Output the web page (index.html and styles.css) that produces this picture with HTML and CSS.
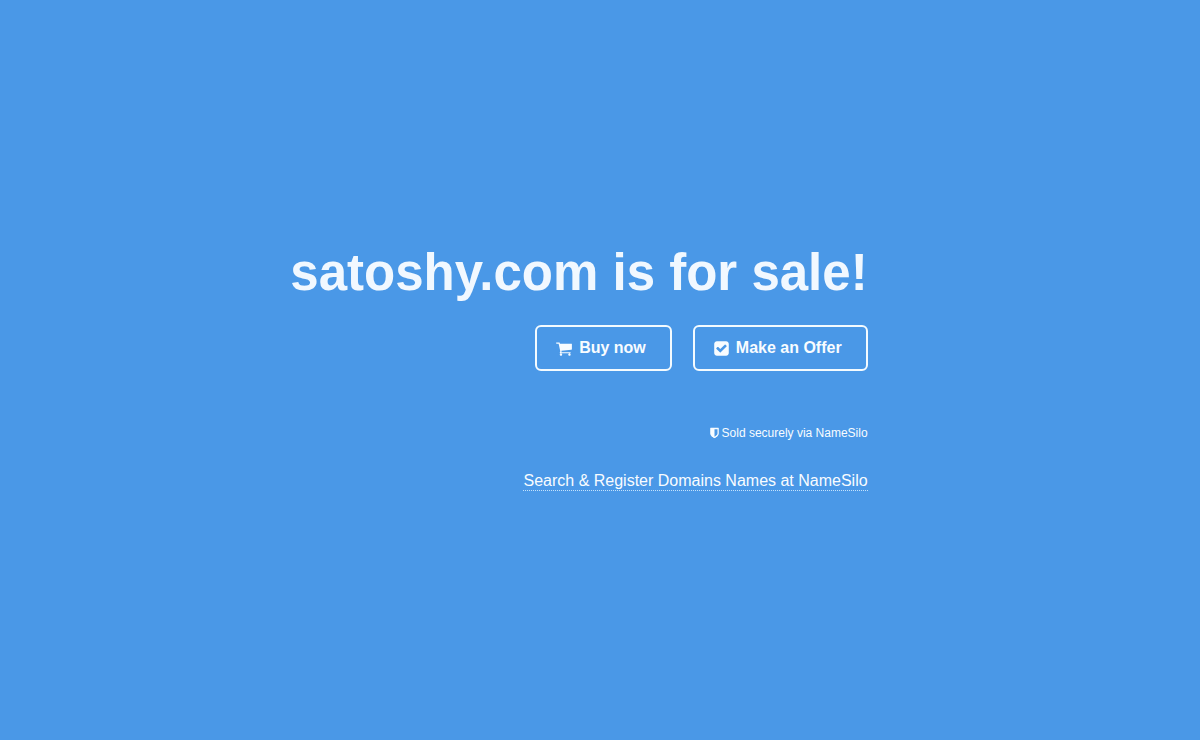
FILE: index.html
```html
<!DOCTYPE html>
<html lang="en">
<head>
    <meta charset="UTF-8">
    <meta name="viewport" content="width=device-width, initial-scale=1.0">
    <title>satoshy.com is for sale!</title>
    <link rel="stylesheet" href="styles.css">
</head>
<body>
    <main class="page">
        <div class="content">
            <h1 class="title">satoshy.com is for sale!</h1>

            <div class="actions">
                <a class="button" href="#buy">
                    <svg class="icon icon-cart" viewBox="0 0 1664 1792" aria-hidden="true">
                        <path d="M640 1536q0 52-38 90t-90 38-90-38-38-90 38-90 90-38 90 38 38 90zm896 0q0 52-38 90t-90 38-90-38-38-90 38-90 90-38 90 38 38 90zm128-1088v512q0 24-16.500 42.500t-40.500 21.500l-1044 122q13 60 13 70 0 16-24 64h920q26 0 45 19t19 45-19 45-45 19h-1024q-26 0-45-19t-19-45q0-11 8-31.500t16-36 21.500-40 15.500-29.500l-177-823h-204q-26 0-45-19t-19-45 19-45 45-19h256q16 0 28.500 6.500t19.500 15.500 13 24.500 8 26 5.500 29.500 4.500 26h1201q26 0 45 19t19 45z"/>
                    </svg>
                    Buy now
                </a>
                <a class="button" href="#offer">
                    <svg class="icon icon-check" viewBox="0 0 1536 1792" aria-hidden="true">
                        <path d="M685 1299l614-614q19-19 19-45t-19-45l-102-102q-19-19-45-19t-45 19l-467 467-211-211q-19-19-45-19t-45 19l-102 102q-19 19-19 45t19 45l358 358q19 19 45 19t45-19zm851-883v960q0 119-84.500 203.500t-203.500 84.500h-960q-119 0-203.500-84.500t-84.500-203.500v-960q0-119 84.500-203.500t203.500-84.500h960q119 0 203.500 84.500t84.500 203.500z"/>
                    </svg>
                    Make an Offer
                </a>
            </div>

            <p class="secure">
                <svg class="icon icon-shield" viewBox="256 0 1280 1792" aria-hidden="true">
                    <path d="M1344 960v-640h-448v1137q119-63 213-137 235-184 235-360zm192-768v768q0 86-33.500 170.500t-83 150-118 127.500-126.500 103-121 77.500-89.500 49.500-42.500 20q-12 6-26 6t-26-6q-16-7-42.500-20t-89.500-49.500-121-77.500-126.500-103-118-127.500-83-150-33.500-170.500v-768q0-26 19-45t45-19h1152q26 0 45 19t19 45z"/>
                </svg>
                Sold securely via NameSilo
            </p>

            <a class="register-link" href="#register">Search &amp; Register Domains Names at NameSilo</a>
        </div>
    </main>
</body>
</html>
```
FILE: styles.css
```css
* {
    margin: 0;
    padding: 0;
    box-sizing: border-box;
}

body {
    font-family: "Liberation Sans", Arial, Helvetica, sans-serif;
    font-size: 16px;
    line-height: 20px;
    color: #f8fcff;
    background: #4a98e7;
}

.page {
    min-height: 100vh;
    display: flex;
    align-items: center;
    justify-content: center;
    padding: 0 42px 6px 0;
}

.content {
    display: flex;
    flex-direction: column;
    align-items: flex-end;
}

.title {
    font-size: 51px;
    line-height: 60px;
    color: #f1f8ff;
    margin-bottom: 22px;
}

.actions {
    display: flex;
    gap: 21px;
    margin-bottom: 52px;
}

.button {
    display: flex;
    align-items: center;
    gap: 7px;
    height: 46px;
    padding: 0 24px 0 19px;
    border: 2px solid #f4fbff;
    border-radius: 6px;
    color: inherit;
    font-weight: bold;
    text-decoration: none;
}

.button:hover {
    background: rgba(255, 255, 255, 0.15);
}

.icon {
    fill: currentColor;
    flex: none;
}

.icon-cart {
    width: 16px;
    height: 17px;
}

.icon-check {
    width: 15px;
    height: 17px;
}

.icon-shield {
    width: 9px;
    height: 12px;
}

.secure {
    display: flex;
    align-items: center;
    gap: 3px;
    font-size: 12px;
    margin-bottom: 29px;
}

.register-link {
    color: inherit;
    line-height: 18px;
    text-decoration: none;
    border-bottom: 1px dotted #c4e2fc;
}
```
